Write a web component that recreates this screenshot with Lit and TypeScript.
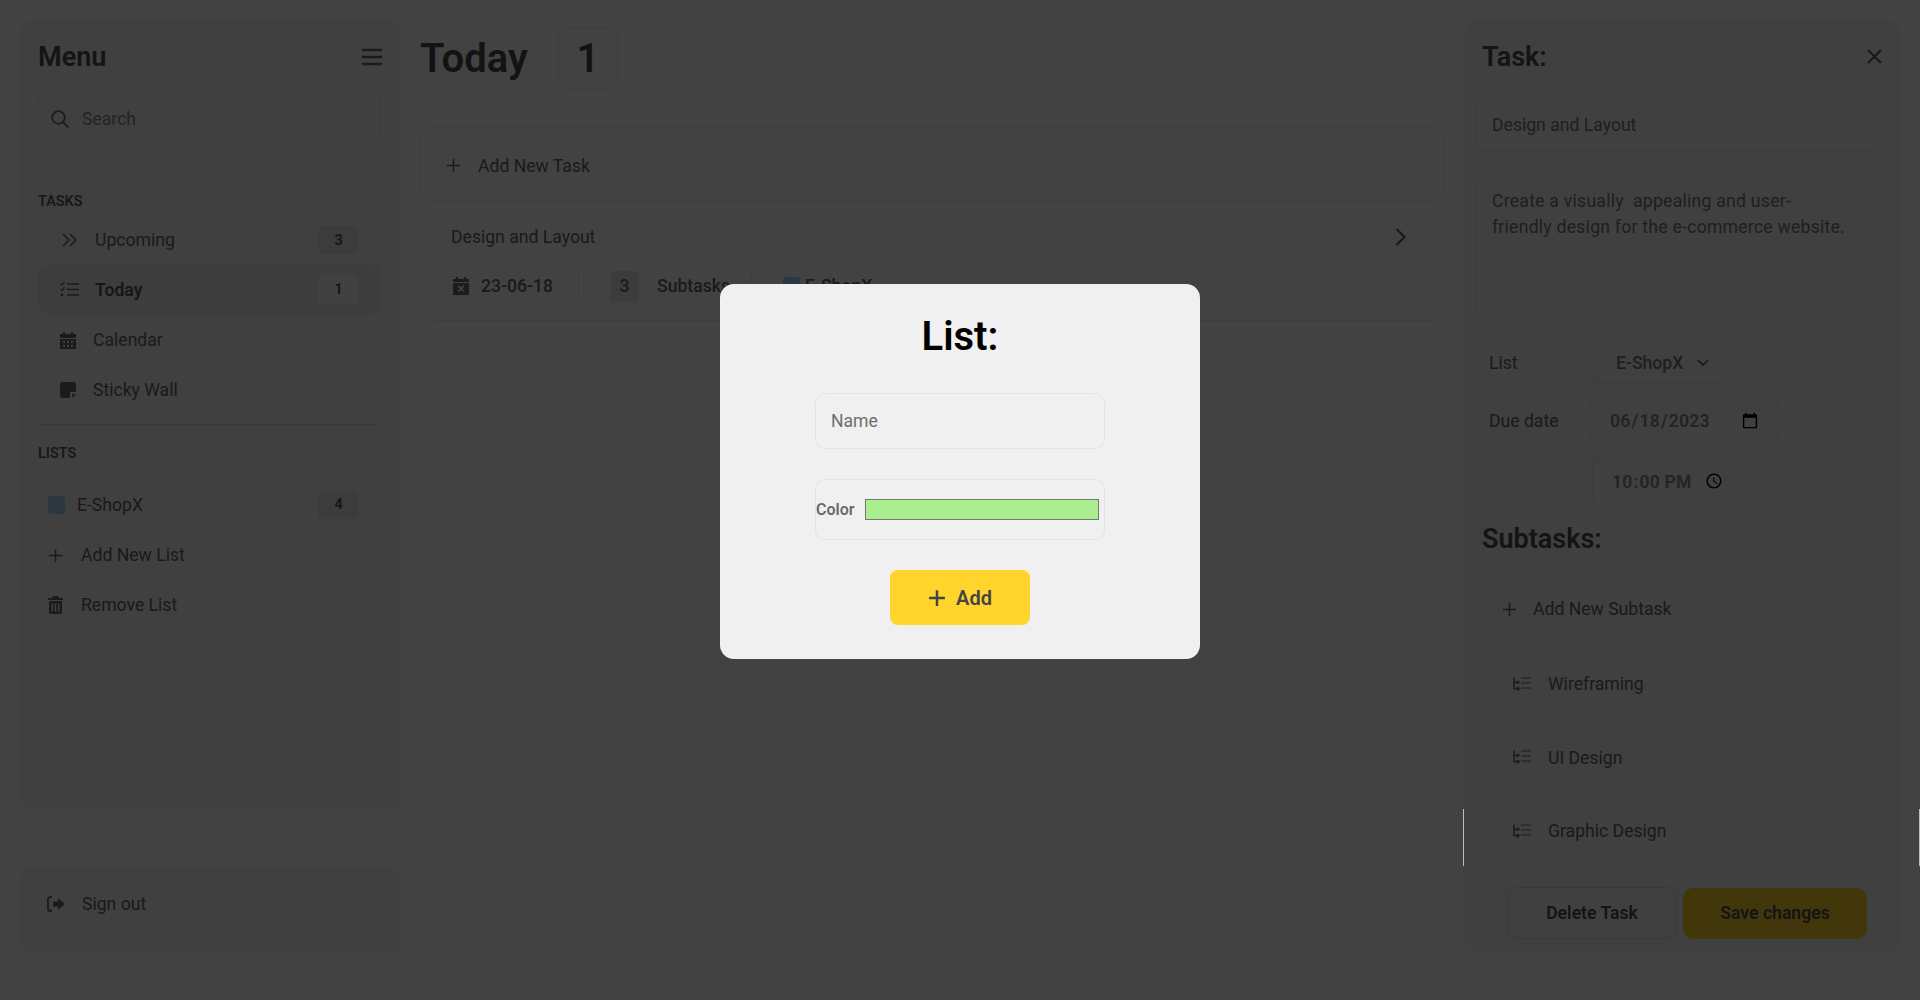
import { LitElement, html, css } from "lit";
import { customElement } from "lit/decorators.js";

const plus = (s = 16, w = 1.6) => html`<svg class="ic" width=${s} height=${s} viewBox="0 0 16 16" fill="none" stroke="currentColor" stroke-width=${w}><path d="M8 1v14M1 8h14"/></svg>`;
const subIcon = html`<svg class="ic" width="18" height="15" viewBox="0 0 18 15"><g fill="none" stroke="#6e6e6e" stroke-width="1.6"><path d="M1 0.5V11.5H4M1 5.5H4"/></g><g fill="#6e6e6e"><rect x="3.5" y="3.8" width="3" height="3" rx="1"/><rect x="3.5" y="10" width="3" height="3.4" rx="1"/></g><g stroke="#9a9a9a" stroke-width="1.5"><path d="M8 1h10M8 6h10M8 11h10"/></g></svg>`;

@customElement("app-root")
export class AppRoot extends LitElement {
  static styles = css`
    :host {
      display: block; position: relative; width: 1920px; height: 1000px; overflow: hidden;
      background: #ffffff; color: #666;
      font-family: Roboto, "Liberation Sans", sans-serif; font-size: 17.6px;
    }
    * { box-sizing: border-box; }
    .ic { display: block; flex: none; }
    .app { display: grid; grid-template-columns: 380px 1025px 435px; column-gap: 20px; padding: 20px; height: 1000px; }
    .left { display: flex; flex-direction: column; gap: 59px; }
    .panel { background: #f5f5f5; border-radius: 14px; }
    .menu { height: 788px; padding: 17px 19px 0 18px; }
    .signout { height: 85px; display: flex; align-items: center; padding: 0 0 12px 27px; gap: 17px; }
    .head { display: flex; justify-content: space-between; align-items: center; height: 40px; }
    .h2 { font-size: 27px; font-weight: 600; color: #4f4f4f; margin: 0; }
    .burger { color: #6a6a6a; margin-right: -1px; }
    .search { display: flex; align-items: center; height: 57px; margin-top: 13px; padding-left: 12px; gap: 13px; border: 1px solid #e8e8e8; border-radius: 10px; color: #8a8a8a; }
    .sec { font-size: 14.4px; font-weight: 600; color: #5c5c5c; height: 20px; line-height: 20px; }
    .sec.tasks { margin-top: 45px; margin-bottom: 3px; }
    .sec.lists { margin-top: 19px; margin-bottom: 15px; }
    .row { display: flex; align-items: center; height: 50px; position: relative; }
    .row.tall { height: 51px; }
    .row.active { background: #ebebeb; border-radius: 10px; height: 49px; color: #555; font-weight: 600; }
    .row .ic { color: #6a6a6a; }
    .badge { margin-left: auto; margin-right: 22px; width: 41px; height: 28px; display: flex; align-items: center; justify-content: center; background: #e8e8e8; border-radius: 5px; font-size: 14.4px; font-weight: 600; color: #555; }
    .active .badge { background: #fafafa; height: 29px; }
    .lbl { white-space: nowrap; }
    .divider { height: 1px; background: #dfdfdf; margin-top: 9px; }
    .swatch { width: 17px; height: 18px; border-radius: 3px; background: #a8d8ff; }

    .main { padding-top: 7px; }
    .title { display: flex; align-items: center; height: 63px; }
    .title h1 { margin: 0; font-size: 40px; font-weight: 600; color: #4c4c4c; width: 138px; }
    .count { width: 60px; height: 63px; border: 1px solid #ececec; border-radius: 8px; display: flex; align-items: center; justify-content: center; font-size: 40px; font-weight: 600; color: #4c4c4c; }
    .addtask { display: flex; align-items: center; height: 76px; margin-top: 36px; padding: 3px 0 0 25px; gap: 17px; border: 1px solid #ececec; border-radius: 14px; }
    .task { height: 119px; border-bottom: 1px solid #ececec; border-radius: 0 0 14px 14px; padding: 23px 39px 0 31px; }
    .task-top { display: flex; justify-content: space-between; align-items: center; height: 24px; }
    .meta { display: flex; align-items: center; margin-top: 21px; height: 32px; font-weight: 500; }
    .vbar { width: 1px; height: 30px; background: #e8e8e8; }
    .num { width: 29px; height: 31px; background: #e8e8e8; border-radius: 5px; display: flex; align-items: center; justify-content: center; }

    .right { padding: 17px 17px 0 11px; height: 932px; display: flex; flex-direction: column; }
    .right .h2.t { margin-left: 6px; }
    .closer { color: #5c5c5c; margin: -1px 1px 0 0; }
    .field { display: block; width: 100%; font: inherit; color: #7a7a7a; background: transparent; border: 1px solid #e6e6e6; border-radius: 10px; outline: none; }
    input.field { height: 55px; margin-top: 20px; padding: 0 15px; }
    textarea.field { height: 151px; margin-top: 20px; padding: 15px; line-height: 26px; resize: none; letter-spacing: .25px; }
    .form-row { display: flex; align-items: center; }
    .form-row label { width: 117px; padding-left: 13px; flex: none; }
    .ctl { font: inherit; font-weight: 600; color: #8a8a8a; background: transparent; border: 1px solid #e6e6e6; border-radius: 8px; outline: none; }
    .select { width: 133px; height: 42px; display: flex; align-items: center; gap: 14px; padding-left: 22px; font-weight: 500; color: #7a7a7a; border: 1px solid #e6e6e6; border-radius: 8px; }
    input.date { width: 188px; height: 48px; padding: 0 16px 0 18px; margin-left: -3px; letter-spacing: .2px; }
    input.time { width: 151px; height: 49px; padding: 0 16px 0 18px; margin-left: -1px; letter-spacing: .2px; }
    .h2.sub { margin: 13px 0 0 6px; height: 40px; line-height: 40px; }
    .subrow { display: flex; align-items: center; border-bottom: 1px solid #ececec; height: 73.5px; padding-left: 37px; gap: 17px; }
    .subrow.add { height: 89px; padding: 12px 0 0 26px; gap: 16px; }
    .btns { display: flex; gap: 6px; margin: 18px 0 0 31px; }
    .btn { display: flex; align-items: center; justify-content: center; height: 52px; border-radius: 10px; font-weight: 600; color: #4f4f4f; }
    .del { width: 170px; border: 1px solid #e0e0e0; }
    .save { width: 184px; background: #ffd52d; height: 51px; margin-top: 1px; }

    .overlay { position: absolute; inset: 0; background: rgba(0, 0, 0, .74); }
    .edge { position: absolute; top: 809px; height: 57px; width: 1px; background: #bdbdbd; }
    .modal { position: absolute; left: 720px; top: 284px; width: 480px; height: 375px; background: #f0f0f0; border-radius: 14px; display: flex; flex-direction: column; align-items: center; }
    .modal h3 { margin: 28px 0 0; height: 50px; line-height: 50px; font-size: 40px; font-weight: 600; color: #000; }
    .m-name { width: 290px; height: 56px; margin-top: 31px; padding: 0 15px; font: inherit; background: transparent; border: 1px solid #e4e4e4; border-radius: 10px; outline: none; }
    .m-name::placeholder { color: #6e6e6e; }
    .m-color { width: 290px; height: 61px; margin-top: 30px; display: flex; align-items: center; border: 1px solid #e4e4e4; border-radius: 10px; font-size: 16px; font-weight: 600; color: #6a6a6a; }
    .m-color span { margin-right: 11px; }
    .m-color input { width: 234px; height: 21px; padding: 0; background: #aaee8f; border: 1px solid #767676; appearance: none; display: block; }
    .m-add { width: 140px; height: 55px; margin-top: 30px; border: 0; border-radius: 8px; background: #ffd52d; display: flex; align-items: center; justify-content: center; gap: 10px; font: inherit; font-size: 20px; font-weight: 600; color: #444; }
  `;

  render() {
    return html`
      <div class="app">
        <div class="left">
          <div class="panel menu">
            <div class="head">
              <h2 class="h2">Menu</h2>
              <svg class="ic burger" width="20" height="18" viewBox="0 0 20 18" fill="none" stroke="currentColor" stroke-width="2.4"><path d="M0 2h20M0 9h20M0 16h20"/></svg>
            </div>
            <div class="search">
              <svg class="ic" width="18" height="18" viewBox="0 0 18 18" fill="none" stroke="#6e6e6e" stroke-width="1.8"><circle cx="7.5" cy="7.5" r="6.3"/><path d="M12 12l5.4 5.4"/></svg>
              <span>Search</span>
            </div>
            <div class="sec tasks">TASKS</div>
            <div class="row">
              <svg class="ic" style="margin:0 18px 0 24px" width="15" height="14" viewBox="0 0 15 14" fill="none" stroke="currentColor" stroke-width="1.6"><path d="M1 1l6 6-6 6M8 1l6 6-6 6"/></svg>
              <span class="lbl">Upcoming</span><span class="badge">3</span>
            </div>
            <div class="row active">
              <svg class="ic" style="margin:0 16px 0 22px" width="19" height="15" viewBox="0 0 19 15" fill="none" stroke="currentColor"><path stroke-width="1.6" d="M7 2h12M7 7.5h12M7 13h12"/><path stroke-width="1.3" d="M.5 1.5l1.5 1.5 2.5-3M.5 7l1.5 1.5 2.5-3"/><circle cx="2" cy="13" r="1.5" fill="currentColor" stroke="none"/></svg>
              <span class="lbl">Today</span><span class="badge">1</span>
            </div>
            <div class="row" style="margin-top:1px">
              <svg class="ic" style="margin:0 17px 0 22px" width="16" height="17" viewBox="0 0 16 17" fill="currentColor"><path d="M3 0h2v2h6V0h2v2h3v4H0V2h3zM0 7h16v10H0zm3 2v2h2V9zm4 0v2h2V9zm4 0v2h2V9zm-8 4v2h2v-2zm4 0v2h2v-2zm4 0v2h2v-2z" fill-rule="evenodd"/></svg>
              <span class="lbl">Calendar</span>
            </div>
            <div class="row">
              <svg class="ic" style="margin:0 17px 0 22px" width="16" height="16" viewBox="0 0 16 16" fill="currentColor"><path d="M2 0h12a2 2 0 0 1 2 2v8h-5a1 1 0 0 0-1 1v5H2a2 2 0 0 1-2-2V2a2 2 0 0 1 2-2zm10 16v-4h4z"/></svg>
              <span class="lbl">Sticky Wall</span>
            </div>
            <div class="divider"></div>
            <div class="sec lists">LISTS</div>
            <div class="row tall">
              <span class="swatch" style="margin:0 12px 0 10px"></span>
              <span class="lbl">E-ShopX</span><span class="badge">4</span>
            </div>
            <div class="row">
              <span style="margin:0 18px 0 10px">${plus(15)}</span>
              <span class="lbl">Add New List</span>
            </div>
            <div class="row">
              <svg class="ic" style="margin:0 18px 0 10px" width="15" height="18" viewBox="0 0 15 18" fill="currentColor"><path d="M5 0h5l1 2h4v2H0V2h4zM1 5h13v11a2 2 0 0 1-2 2H3a2 2 0 0 1-2-2zm2.500 2.500v8h1.500v-8zm3.200 0v8h1.600v-8zm3.300 0v8h1.500v-8z" fill-rule="evenodd"/></svg>
              <span class="lbl">Remove List</span>
            </div>
          </div>
          <div class="panel signout">
            <svg class="ic" width="18" height="16" viewBox="0 0 18 16" fill="#6a6a6a"><path d="M5 1H3a2 2 0 0 0-2 2v10a2 2 0 0 0 2 2h2" fill="none" stroke="#6a6a6a" stroke-width="1.800"/><path d="M11 2l7 6-7 6v-3.500H6v-5h5z"/></svg>
            <span>Sign out</span>
          </div>
        </div>

        <div class="main">
          <div class="title"><h1>Today</h1><div class="count">1</div></div>
          <div class="addtask">${plus(15)}<span>Add New Task</span></div>
          <div class="task">
            <div class="task-top">
              <span>Design and Layout</span>
              <svg class="ic" width="11" height="18" viewBox="0 0 11 18" fill="none" stroke="#5c5c5c" stroke-width="2.200"><path d="M1.500 1l8 8-8 8"/></svg>
            </div>
            <div class="meta">
              <svg class="ic" style="margin:0 12px 0 2px" width="16" height="18" viewBox="0 0 16 18" fill="#6a6a6a"><path d="M3 0h2v2h6V0h2v2h3v3H0V2h3zM0 6h16v12H0zm4.600 3.400l2.300 2.300-2.300 2.300 1.100 1.100L8 12.800l2.300 2.300 1.100-1.100-2.300-2.300 2.300-2.300-1.100-1.100L8 10.600 5.700 8.300z" fill-rule="evenodd"/></svg>
              <span style="width:97px">23-06-18</span>
              <span class="vbar"></span>
              <span class="num" style="margin:0 18px 0 31px">3</span>
              <span style="width:94px">Subtasks</span>
              <span class="vbar"></span>
              <span class="swatch" style="margin:0 5px 0 31px"></span>
              <span>E-ShopX</span>
            </div>
          </div>
        </div>

        <div class="panel right">
          <div class="head">
            <h2 class="h2 t">Task:</h2>
            <svg class="ic closer" width="15" height="15" viewBox="0 0 15 15" fill="none" stroke="currentColor" stroke-width="2.200"><path d="M1 1l13 13M14 1L1 14"/></svg>
          </div>
          <input class="field" .value=${"Design and Layout"} />
          <textarea class="field" .value=${"Create a visually  appealing and user-\nfriendly design for the e-commerce website."}></textarea>
          <div class="form-row" style="margin-top:19px">
            <label>List</label>
            <div class="select"><span>E-ShopX</span><svg class="ic" width="12" height="8" viewBox="0 0 12 8" fill="none" stroke="#555" stroke-width="1.600"><path d="M1 1l5 5 5-5"/></svg></div>
          </div>
          <div class="form-row" style="margin-top:13px">
            <label>Due date</label>
            <input class="ctl date" type="date" .value=${"2023-06-18"} />
          </div>
          <div class="form-row" style="margin-top:12px">
            <label></label>
            <input class="ctl time" type="time" .value=${"22:00"} />
          </div>
          <h2 class="h2 sub">Subtasks:</h2>
          <div class="subrow add">${plus(15)}<span>Add New Subtask</span></div>
          <div class="subrow">${subIcon}<span>Wireframing</span></div>
          <div class="subrow">${subIcon}<span>UI Design</span></div>
          <div class="subrow">${subIcon}<span>Graphic Design</span></div>
          <div class="btns">
            <div class="btn del">Delete Task</div>
            <div class="btn save">Save changes</div>
          </div>
        </div>
      </div>

      <div class="overlay"></div>
      <div class="edge" style="left:1463px"></div>
      <div class="edge" style="left:1919px"></div>
      <div class="modal">
        <h3>List:</h3>
        <input class="m-name" placeholder="Name" />
        <div class="m-color"><span>Color</span><input type="text" readonly /></div>
        <button class="m-add">${plus(18, 2.2)}<span>Add</span></button>
      </div>
    `;
  }
}
